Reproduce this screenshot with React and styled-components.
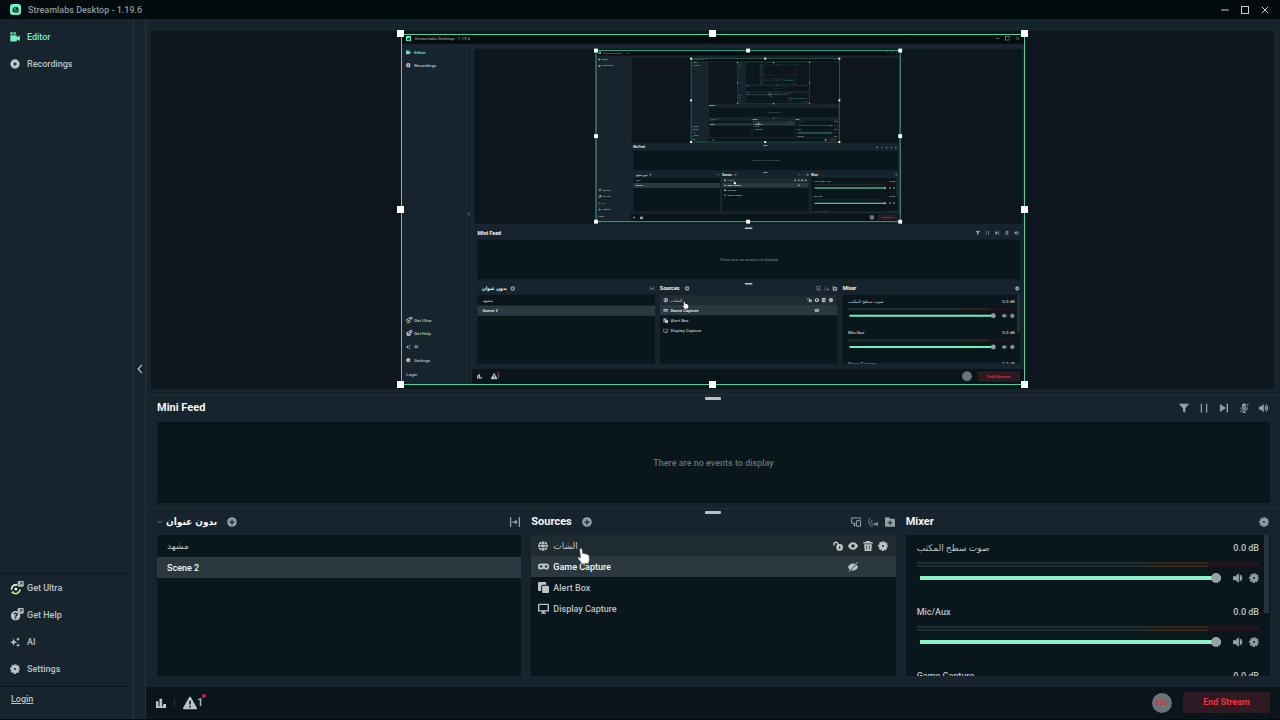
import React, { createContext, useContext } from "react";
import styled, { createGlobalStyle, css } from "styled-components";
import { FaQuestionCircle, FaGlobe } from "react-icons/fa";

const c = {
  title: "#020b0e",
  panel: "#17242d",
  line: "#26343c",
  stage: "#0c161c",
  well: "#09161c",
  footer: "#09151a",
  selected: "#2b383f",
  hover: "#202b31",
  text: "#bdc3c6",
  icon: "#949ea3",
  bright: "#f4f6f7",
  muted: "#667177",
  teal: "#74efbf",
  frame: "#4fd0a0",
  red: "#f0303f",
  redBg: "#2e1a23",
};

const Global = createGlobalStyle`
  *, *::before, *::after { box-sizing: border-box; }
  body {
    margin: 0;
    background: ${c.title};
    color: ${c.text};
    font: 500 9px/14px Roboto, "DejaVu Sans", sans-serif;
  }
  h2 { margin: 0; }
  ul { margin: 0; padding: 0; list-style: none; }
`;

/* ---------- icons ---------- */

const Svg = ({ size = 10, children, ...rest }) => (
  <svg width={size} height={size} viewBox="0 0 16 16" fill="currentColor" aria-hidden="true" {...rest}>
    {children}
  </svg>
);
const stroke = { fill: "none", stroke: "currentColor", strokeWidth: 1.6 };

const LogoIcon = (p) => (
  <Svg {...p}>
    <rect width="16" height="16" rx="4" fill={c.teal} />
    <path d="M3.5 9.5a5 5 0 0 1 5-5h1a3 3 0 0 1 3 3v5h-6a3 3 0 0 1-3-3z" fill="#0c3a33" />
    <path d="M6 8.6a2.6 2.6 0 0 1 2.6-2.4" fill="none" stroke={c.teal} strokeWidth="1.2" />
    <path d="M8.2 9v1.6M10.6 9v1.6" stroke={c.teal} strokeWidth="1.1" />
  </Svg>
);
const EditorIcon = (p) => (
  <Svg {...p}>
    <rect x="0.5" y="0.5" width="3.6" height="3.6" rx="0.8" />
    <rect x="5.6" y="0.5" width="3.6" height="3.6" rx="0.8" />
    <path d="M0.5 5.2h9.4a1 1 0 0 1 1 1v2l4-2.4a.5.5 0 0 1 .8.4v7.4a.5.5 0 0 1-.8.4l-4-2.2v2.4a1 1 0 0 1-1 1H1.5a1 1 0 0 1-1-1z" />
  </Svg>
);
const RecordingsIcon = (p) => (
  <Svg {...p}>
    <path fillRule="evenodd" d="M8 .5a7.5 7.5 0 1 1 0 15 7.5 7.5 0 0 1 0-15zM6.2 4.8v6.4L11.4 8z" />
  </Svg>
);
const GearIcon = (p) => (
  <Svg {...p}>
    <circle cx="8" cy="8" r="3.9" fill="none" stroke="currentColor" strokeWidth="4.6" />
    <circle cx="8" cy="8" r="6.6" fill="none" stroke="currentColor" strokeWidth="2.4" strokeDasharray="3.7 1.484" strokeDashoffset="1.85" />
  </Svg>
);
const SparkIcon = (p) => (
  <Svg {...p}>
    <path d="M5.8 2.400 7.400 6.600l4.200 1.600-4.200 1.600-1.600 4.200-1.600-4.200L0 8.200l4.200-1.600z" />
    <path d="m12.800.200 1 2.200 2.200 1-2.200 1-1 2.200-1-2.200-2.200-1 2.200-1zM12.800 9.800l1 2.200 2.200 1-2.200 1-1 2.200-1-2.200-2.200-1 2.200-1z" />
  </Svg>
);
const ExternalBadge = () => (
  <>
    <rect x="9" y="0" width="8.6" height="8.2" rx="1.4" fill="#b9c0c3" />
    <path d="M11.4 6 15 2.4M12.4 2.2h2.8V5" fill="none" stroke={c.panel} strokeWidth="1.1" />
  </>
);
const UltraIcon = ({ size = 14, ...p }) => (
  <svg width={size} height={size} viewBox="0 0 20 20" aria-hidden="true" {...p}>
    <g transform="translate(1 3)">
      <path d="M1.2 9.5a6 6 0 0 1 8-6.6" fill="none" stroke="#f1f4e8" strokeWidth="2.4" />
      <path d="M2.2 12.2a6 6 0 0 0 11-3.4" fill="none" stroke="#c6e27c" strokeWidth="2.4" />
      <circle cx="7.4" cy="8.6" r="2.1" fill="#f1f4e8" />
      <path d="m1.5 14.5 2.6-2.4" stroke="#c6e27c" strokeWidth="2" />
    </g>
    <g transform="translate(2 0)"><ExternalBadge /></g>
  </svg>
);
const HelpIcon = ({ size = 14, ...p }) => (
  <svg width={size} height={size} viewBox="0 0 20 20" aria-hidden="true" fill={c.text} color={c.text} {...p}>
    <FaQuestionCircle x="1" y="4" size="14" />
    <g transform="translate(2 0)"><ExternalBadge /></g>
  </svg>
);
const StatsIcon = (p) => (
  <Svg {...p}>
    <path d="M0 5h4v11H0zM5.6 1h4.2v15H5.6zM11.4 9.5H16V16h-4.6zM0 13.6h16V16H0z" />
  </Svg>
);
const WarningIcon = (p) => (
  <Svg {...p}>
    <path fillRule="evenodd" d="M7 1.4a1.2 1.2 0 0 1 2 0l6.8 12a1.2 1.2 0 0 1-1 1.8H1.2a1.2 1.2 0 0 1-1-1.8zM7.1 5.4v4.4h1.8V5.4zm0 5.8V13h1.8v-1.8z" />
  </Svg>
);
const PlusIcon = (p) => (
  <Svg {...p}>
    <path fillRule="evenodd" d="M8 .3a7.7 7.7 0 1 1 0 15.4A7.7 7.7 0 0 1 8 .3zM7 3.8V7H3.8v2H7v3.2h2V9h3.2V7H9V3.8z" />
  </Svg>
);
const TransitionIcon = (p) => (
  <Svg {...p}>
    <path d="M1 0v16M15 0v16M3.600 8h7" {...stroke} strokeWidth="2" />
    <path d="M8 4 12.600 8 8 12z" />
  </Svg>
);
const FilterIcon = (p) => (
  <Svg {...p}>
    <path d="M.6 1h14.8c.5 0 .7.6.4 1L10.200 8.400V14.400a.7.7 0 0 1-1.100.6l-2.800-2V8.400L.2 2c-.3-.4-.1-1 .4-1z" />
  </Svg>
);
const PauseIcon = (p) => (
  <Svg {...p}>
    <path d="M2.800 1h2v14h-2zM11.200 1h2v14h-2z" />
  </Svg>
);
const SkipIcon = (p) => (
  <Svg {...p}>
    <path d="M1.500 1.600v12.800L11.200 8zM12.200 1.200h2.200v13.600h-2.200z" />
  </Svg>
);
const MutedIcon = (p) => (
  <Svg {...p}>
    <path d="M4.800 4.500A3.600 3.600 0 0 1 11.400 2.200L4.800 9.400zM11.600 5.400V7.500A3.600 3.600 0 0 1 8 11.200l-1.600-.4z" />
    <path d="M2.600 7.400c0 1 .3 1.900.8 2.600M13.600 7.200A5.500 5.500 0 0 1 8 13l-1.800-.3M8 12.600V15M5 15h6M1 15 15.400 1" {...stroke} />
  </Svg>
);
const VolumeIcon = (p) => (
  <Svg {...p}>
    <path d="M0 5.400h3L7.600 1.400v13.200L3 10.600H0z" />
    <path d="M9.600 5.300a3.600 3.600 0 0 1 0 5.400M11.200 2.600a7 7 0 0 1 0 10.800" {...stroke} strokeWidth="2" />
  </Svg>
);
const SpeakerIcon = (p) => (
  <Svg {...p}>
    <path d="M0 5h3.400L9.400.4v15.200L3.400 11H0zM10.800 2.400a5.800 5.800 0 0 1 0 11.200z" />
  </Svg>
);
const GlobeIcon = ({ size = 10, ...p }) => <FaGlobe size={size} aria-hidden="true" {...p} />;
const PadIcon = (p) => (
  <Svg {...p}>
    <path fillRule="evenodd" d="M4 3.600h8a4.300 4.300 0 0 1 0 8.700c-1.500 0-2.200-1.200-4-1.200s-2.500 1.200-4 1.200a4.300 4.300 0 0 1 0-8.700zM3.800 5.800v1.400H2.400v1.500h1.400v1.400h1.400V8.700h1.400V7.200H5.200V5.800zM11.800 6a1.900 1.900 0 1 0 0 3.900 1.900 1.900 0 0 0 0-3.900z" />
  </Svg>
);
const AlertBoxIcon = (p) => (
  <Svg {...p}>
    <path d="M1.500 0h9A1.500 1.500 0 0 1 12 1.500V4H7.500A3 3 0 0 0 4.500 7v6h-3A1.500 1.500 0 0 1 0 11.500v-10A1.500 1.500 0 0 1 1.500 0z" />
    <rect x="6" y="5.500" width="10" height="10.500" rx="1.500" />
  </Svg>
);
const DisplayIcon = (p) => (
  <Svg {...p}>
    <path fillRule="evenodd" d="M1.400 1h13.200c.8 0 1.400.6 1.400 1.400v8.700c0 .8-.6 1.400-1.400 1.400H9.800V14h1.800v1.600H4.400V14h1.800v-1.500H1.400c-.8 0-1.400-.6-1.400-1.400V2.400C0 1.600.6 1 1.400 1zM2 3v7.500h12V3z" />
  </Svg>
);
const UnlockIcon = (p) => (
  <Svg {...p}>
    <path d="M1.500 7V4.800a3 3 0 0 1 6 0V8" fill="none" stroke="currentColor" strokeWidth="2.400" />
    <path fillRule="evenodd" d="M10.600 4.800a5.400 5.400 0 1 1 0 10.800 5.400 5.400 0 0 1 0-10.800zm-1 3.500v3.900h2V8.300z" />
  </Svg>
);
const EyeIcon = (p) => (
  <Svg {...p}>
    <path fillRule="evenodd" d="M8 2c4 0 6.600 2.900 8 6-1.400 3.100-4 6-8 6S1.400 11.100 0 8c1.400-3.100 4-6 8-6zM8 5.200a2.800 2.800 0 1 0 0 5.600 2.800 2.800 0 0 0 0-5.600z" />
  </Svg>
);
const HiddenIcon = (p) => (
  <Svg {...p}>
    <path d="M8 2.200c1.300 0 2.400.3 3.400.7L3 12.800C1.600 11.500.6 9.800 0 8c1.400-3.300 4.300-5.800 8-5.800zM13.600 4.300C14.700 5.300 15.500 6.600 16 8c-1.400 3.300-4.300 5.800-8 5.800-1 0-2-.2-2.900-.5z" />
    <path d="M1.400 15.600 15 .4" {...stroke} />
  </Svg>
);
const TrashIcon = (p) => (
  <Svg {...p}>
    <path fillRule="evenodd" d="M5.500 0h5l.8 1.500H15.500v2.500H.5V1.500h4.200zM1.800 5h12.400l-.8 10a1 1 0 0 1-1 1H3.600a1 1 0 0 1-1-1zM5.400 7.200v6.200h1.100V7.200zm4.100 0v6.200h1.100V7.200z" />
  </Svg>
);
const DualIcon = (p) => (
  <Svg {...p}>
    <path d="M15 4V1.500H1V10h6.500M3.500 13.500h4M5.600 10v3.500M9 5.800h6.200v9H9z" {...stroke} />
  </Svg>
);
const SignalIcon = (p) => (
  <Svg {...p}>
    <path d="M3.600 1.500C.6 4.500.6 9 3.200 12.400c1.300 1.600 2.800 2.400 4.400 2.600M7 4.400c-1.600 1.800-1.600 4.400-.2 6.400.5.800 1.200 1.300 2 1.600" {...stroke} strokeWidth="1.300" />
    <path d="M9.500 9.500h3l3.500-2v7l-3.500-1.500h-3z" opacity="0.800" />
  </Svg>
);
const FolderIcon = (p) => (
  <Svg {...p}>
    <path fillRule="evenodd" d="M1.400.5h4.800l2 2.400h6.400c.8 0 1.400.6 1.400 1.400v9.800c0 .8-.6 1.400-1.400 1.400H1.400C.6 15.500 0 14.900 0 14.100V1.900C0 1.100.6.500 1.400.5zM7.200 5.600v2.600H4.600v1.800h2.600v2.600H9V10h2.600V8.200H9V5.600z" />
  </Svg>
);
const ChevronDown = (p) => (
  <Svg {...p}><path d="M2 4.500 8 11l6-6.500" {...stroke} /></Svg>
);
const ChevronLeft = (p) => (
  <Svg {...p}><path d="M11 1.500 5 8l6 6.500" {...stroke} strokeWidth="2" /></Svg>
);
const MinimizeIcon = (p) => <Svg {...p}><path d="M2 8h12" {...stroke} /></Svg>;
const MaximizeIcon = (p) => <Svg {...p}><rect x="2.400" y="2.400" width="11.200" height="11.200" {...stroke} /></Svg>;
const CloseIcon = (p) => <Svg {...p}><path d="m3 3 10 10m0-10-10 10" {...stroke} /></Svg>;
const HandIcon = ({ size = 16, ...p }) => (
  <svg width={size} height={size} viewBox="0 0 16 16" aria-hidden="true" {...p}>
    <path d="M3.600 1.600c0-1.400 2.400-1.400 2.600 0l.6 4 .8-.3c.7-.2 1.300.1 1.600.6.800-.4 1.500 0 1.800.6 1-.3 1.900.2 2 1.400l.5 3.600-1 4.300H6L2 10.600c-.7-1 .6-2 1.500-1.300l1 .8z" fill="#fff" stroke="#2a3338" strokeWidth="0.600" />
  </svg>
);

/* ---------- data ---------- */

const navTop = [
  { label: "Editor", icon: EditorIcon, active: true },
  { label: "Recordings", icon: RecordingsIcon },
];
const navBottom = [
  { label: "Get Ultra", icon: UltraIcon, size: 14 },
  { label: "Get Help", icon: HelpIcon, size: 14 },
  { label: "AI", icon: SparkIcon },
  { label: "Settings", icon: GearIcon },
];
const feedTools = [
  ["Filter events", FilterIcon],
  ["Pause queue", PauseIcon],
  ["Skip alert", SkipIcon],
  ["Mute events", MutedIcon],
  ["Volume", VolumeIcon],
];
const scenes = [{ name: "مشهد" }, { name: "Scene 2", selected: true }];
const sources = [
  { name: "الشات", icon: GlobeIcon, hovered: true },
  { name: "Game Capture", icon: PadIcon, selected: true, hidden: true },
  { name: "Alert Box", icon: AlertBoxIcon },
  { name: "Display Capture", icon: DisplayIcon },
];
const channels = ["صوت سطح المكتب", "Mic/Aux", "Game Capture"];

/* ---------- captured screen shown inside the preview ---------- */

const arabicTitle = css`
  font-family: "DejaVu Sans Condensed", "DejaVu Sans", sans-serif;
  font-size: 10px;
`;
const Label = styled.text`
  font-family: Roboto, "DejaVu Sans", sans-serif;
  font-size: ${(p) => (p.$title ? 11 : 9)}px;
  font-weight: ${(p) => (p.$title ? 700 : 500)};
  fill: ${(p) => p.$color};
  ${(p) => p.$arabic && arabicTitle}
`;

const DepthContext = createContext(0);

/* Labels of the innermost screens are smaller than a pixel, so they become plain strokes. */
function CaptureText({ x, y, color = c.text, title, arabic, anchor = "start", children }) {
  const depth = useContext(DepthContext);
  if (depth < 2) {
    const width = children.length * (title ? 6 : 5);
    const shift = anchor === "middle" ? width / 2 : anchor === "end" ? width : 0;
    return <rect x={x - shift} y={y - 6} width={width} height="5" fill={color} opacity="0.6" />;
  }
  return (
    <Label x={x} y={y} textAnchor={anchor} $color={color} $title={title} $arabic={arabic}>
      {children}
    </Label>
  );
}

const handlePoints = [[0, 0], [0.5, 0], [1, 0], [0, 0.5], [1, 0.5], [0, 1], [0.5, 1], [1, 1]];

function CapturedScreen({ depth }) {
  return (
    <DepthContext.Provider value={depth}>
      <g color={c.text}>
        <rect width="1280" height="720" fill={c.panel} />
        <rect width="1280" height="20" fill={c.title} />
        <LogoIcon x="10" y="4" size="11" />
        <CaptureText x="28" y="13" color="#8f979b">Streamlabs Desktop - 1.19.6</CaptureText>
        <MinimizeIcon x="1219" y="4" />
        <MaximizeIcon x="1239" y="4" />
        <CloseIcon x="1260" y="4" />
        <rect x="133" y="20" width="1" height="700" fill={c.line} />
        <rect x="145" y="20" width="1" height="700" fill={c.line} />
        <ChevronLeft x="135" y="364" size="9" />
        {navTop.map(({ label, icon: Icon, active }, i) => (
          <g key={label} color={active ? c.teal : c.text}>
            <Icon x="10" y={32 + i * 27} />
            <CaptureText x="27" y={40 + i * 27} color={active ? c.teal : c.text}>{label}</CaptureText>
          </g>
        ))}
        {navBottom.map(({ label, icon: Icon, size }, i) => (
          <g key={label}>
            <Icon x="10" y={(size ? 580 : 583) + i * 27} size={size} />
            <CaptureText x="27" y={591 + i * 27}>{label}</CaptureText>
          </g>
        ))}
        <CaptureText x="11" y="702">Login</CaptureText>

        <rect x="151" y="31" width="1123" height="358" fill={c.stage} />
        {depth > 0 && <CaptureFrame depth={depth} />}
        <rect x="705" y="397" width="16" height="3" rx="1" fill={c.text} />
        <CaptureText x="157" y="412" title color={c.bright}>Mini Feed</CaptureText>
        <g color={c.icon}>
          {feedTools.map(([label, Icon], i) => <Icon key={label} x={1178 + i * 20} y="403" />)}
        </g>
        <rect x="157" y="422" width="1113" height="81" fill={c.well} />
        <CaptureText x={713} y="465" anchor="middle" color={c.muted}>There are no events to display</CaptureText>
        <rect x="705" y="511" width="16" height="3" rx="1" fill={c.text} />

        <CaptureText x="166" y="526" title arabic color={c.bright}>بدون عنوان</CaptureText>
        <g color={c.icon}>
          <PlusIcon x="224" y="517" />
          <TransitionIcon x="510" y="517" />
          <PlusIcon x="582" y="517" />
          <DualIcon x="851" y="517" />
          <SignalIcon x="868" y="517" />
          <FolderIcon x="885" y="517" />
          <GearIcon x="1259" y="517" />
        </g>
        <CaptureText x="531" y="526" title color={c.bright}>Sources</CaptureText>
        <CaptureText x="906" y="526" title color={c.bright}>Mixer</CaptureText>

        <rect x="157" y="535" width="364" height="141" fill={c.well} />
        <rect x="157" y="557" width="364" height="21" fill={c.selected} />
        {scenes.map((s, i) => (
          <CaptureText key={s.name} x="167" y={549 + i * 21} color={s.selected ? c.bright : c.text}>{s.name}</CaptureText>
        ))}
        <rect x="531" y="535" width="364" height="141" fill={c.well} />
        <rect x="531" y="535" width="364" height="21" fill={c.hover} />
        <rect x="531" y="556" width="364" height="21" fill={c.selected} />
        {sources.map(({ name, icon: Icon, selected }, i) => (
          <g key={name}>
            <Icon x="538" y={541 + i * 21} />
            <CaptureText x="553" y={549 + i * 21} color={selected ? c.bright : c.text}>{name}</CaptureText>
          </g>
        ))}
        <UnlockIcon x="833" y="541" />
        <EyeIcon x="848" y="541" />
        <TrashIcon x="862" y="541" />
        <GearIcon x="877" y="541" />
        <HiddenIcon x="848" y="562" />
        <HandIcon x="576" y="548" />

        <svg x="906" y="535" width="364" height="141" viewBox="0 0 364 141">
          <rect width="364" height="141" fill={c.well} />
          {channels.map((name, i) => (
            <g key={name} transform={`translate(0 ${i * 64})`}>
              <CaptureText x={11} y="16">{name}</CaptureText>
              <CaptureText x={353} y="16" anchor="end">0.0 dB</CaptureText>
              <rect x="11" y="27" width="234" height="5" fill="#1a2c2b" />
              <rect x="245" y="27" width="56" height="5" fill="#30241a" />
              <rect x="301" y="27" width="52" height="5" fill="#290f19" />
              <rect x="14" y="41" width="296" height="4" rx="1" fill={c.teal} />
              <circle cx="309" cy="43" r="5" fill={c.icon} />
              <g color={c.icon}>
                <SpeakerIcon x="327" y="38" />
                <GearIcon x="343" y="38" />
              </g>
            </g>
          ))}
          <rect x="358" y="0" width="5" height="78" fill="#27343b" />
        </svg>

        <rect x="146" y="687" width="1134" height="33" fill={c.footer} />
        <StatsIcon x="156" y="697" />
        <WarningIcon x="184" y="695" size="14" />
        <CaptureText x={197} y="706">1</CaptureText>
        <circle cx="200" cy="696" r="2" fill="#d01f45" />
        <circle cx="1161" cy="702" r="10" fill="#69737a" />
        <rect x="1183" y="692" width="87" height="21" rx="2" fill={c.redBg} />
        <CaptureText x={1226} y="706" anchor="middle" color={c.red}>End Stream</CaptureText>
      </g>
    </DepthContext.Provider>
  );
}

function CaptureFrame({ depth }) {
  return (
    <g>
      <svg x="400" y="34" width="624" height="351" viewBox="0 0 1280 720">
        <CapturedScreen depth={depth - 1} />
      </svg>
      <rect x="400" y="34" width="624" height="351" fill="none" stroke={c.frame} strokeWidth="2" opacity={0.4 + depth * 0.1} />
      {handlePoints.map(([px, py]) => (
        <rect key={`${px}-${py}`} x={396 + px * 624} y={30 + py * 351} width="8" height="8" fill="#fff" />
      ))}
    </g>
  );
}

/* ---------- page ---------- */

const Window = styled.div`
  min-height: 100vh;
  display: flex;
  flex-direction: column;
  padding-bottom: 1px;
`;
const TitleBar = styled.header`
  height: 19px;
  flex: none;
  display: flex;
  align-items: center;
  gap: 7px;
  padding: 0 10px;
  background: ${c.title};
  color: #8f979b;
`;
const WindowButtons = styled.div`
  display: flex;
  gap: 10px;
  margin-left: auto;
  color: #c9cdcf;
`;
const IconButton = styled.button`
  display: flex;
  flex: none;
  padding: 0;
  border: 0;
  background: none;
  color: inherit;
  cursor: pointer;
`;
const Body = styled.div`
  flex: 1;
  display: flex;
  background: ${c.panel};
`;
const Sidebar = styled.nav`
  width: 134px;
  flex: none;
  display: flex;
  flex-direction: column;
  border-right: 1px solid ${c.line};
  padding-top: 4px;
`;
const NavList = styled.ul`
  ${(p) => p.$bottom && css`
    margin: auto 4px 0 0;
    border-top: 1px solid #101a20;
    border-bottom: 1px solid #0b151a;
    padding-bottom: 4px;
  `}
`;
const NavLink = styled.a`
  display: flex;
  align-items: center;
  height: 27px;
  padding-left: 10px;
  color: ${(p) => (p.$active ? c.teal : c.text)};
  text-decoration: none;
`;
const NavIcon = styled.span`
  display: flex;
  width: 17px;
`;
const LoginLink = styled.a`
  margin: 5px 11px 13px;
  color: ${c.text};
`;
const CollapseStrip = styled.div`
  width: 12px;
  flex: none;
  display: flex;
  align-items: center;
  justify-content: center;
  border-right: 1px solid ${c.line};
  color: ${c.text};
`;
const Main = styled.main`
  flex: 1;
  min-width: 0;
  display: flex;
  flex-direction: column;
`;
const Stage = styled.section`
  flex: 1;
  min-height: 200px;
  display: flex;
  justify-content: center;
  margin: 12px 6px 5px 5px;
  padding: 3px 0 4px;
  background: ${c.stage};
`;
const Selection = styled.div`
  position: relative;
  aspect-ratio: 16 / 9;
  outline: 1px solid ${c.frame};
  outline-offset: -1px;
`;
const Picture = styled.svg`
  display: block;
  width: 100%;
  height: 100%;
`;
const Handle = styled.span`
  position: absolute;
  left: ${(p) => p.$x * 100}%;
  top: ${(p) => p.$y * 100}%;
  width: 7px;
  height: 7px;
  margin: -4px;
  background: #fff;
`;
const Splitter = styled.div`
  height: 6px;
  flex: none;
  display: flex;
  justify-content: center;
  align-items: flex-end;
  border-top: 1px solid #212e36;

  &::after {
    content: "";
    width: 16px;
    height: 3px;
    border-radius: 1px;
    background: #b9c1c6;
  }
`;
const PanelHead = styled.div`
  display: flex;
  align-items: center;
  gap: 10px;
  height: ${(p) => p.$height || 21}px;
  padding: 0 1px 6px 0;
  color: ${c.icon};
`;
const PanelTitle = styled.h2`
  color: ${c.bright};
  font-size: 11px;
  line-height: 16px;
  font-weight: 700;
  ${(p) => p.$arabic && arabicTitle}
`;
const Tools = styled.div`
  display: flex;
  align-items: center;
  gap: ${(p) => p.$gap}px;
  margin-left: auto;
`;
const Feed = styled.section`
  padding: 0 10px 5px 11px;
`;
const FeedBox = styled.div`
  height: 81px;
  display: flex;
  align-items: center;
  justify-content: center;
  background: ${c.well};
  color: ${c.muted};
`;
const Panels = styled.div`
  display: grid;
  grid-template-columns: repeat(3, 1fr);
  gap: 10px;
  padding: 0 10px 11px 11px;
`;
const Well = styled.div`
  position: relative;
  height: 141px;
  overflow: hidden;
  background: ${c.well};
`;
const Row = styled.li`
  position: relative;
  display: flex;
  align-items: center;
  height: 21px;
  margin-bottom: ${(p) => (p.$spaced ? 1 : 0)}px;
  padding: 0 8px 0 ${(p) => p.$inset}px;
  background: ${(p) => (p.$selected ? c.selected : p.$hovered ? c.hover : "transparent")};
  color: ${(p) => (p.$selected ? c.bright : c.text)};
`;
const RowIcon = styled.span`
  display: flex;
  width: 15px;
  color: ${c.text};
`;
const RowTools = styled.div`
  display: flex;
  gap: 5px;
  margin-left: auto;
  padding-right: ${(p) => (p.$short ? 30 : 0)}px;
  color: ${c.text};
`;
const Pointer = styled.span`
  position: absolute;
  left: 45px;
  top: 13px;
  z-index: 2;
  display: flex;
`;
const TitleCaret = styled.span`
  display: flex;
  margin-right: -7px;
`;
const Channel = styled.div`
  height: 64px;
  padding: 0 11px;
`;
const ChannelList = styled.div`
  padding-top: 6px;
`;
const ChannelHead = styled.div`
  display: flex;
  justify-content: space-between;
  line-height: 14px;
`;
const Meter = styled.div`
  display: grid;
  grid-template-columns: 68fr 17fr 15fr;
  height: 2px;
  margin-top: ${(p) => (p.$first ? 7 : 1)}px;
`;
const MeterZone = styled.span`
  background: ${(p) => p.$color};
`;
const SliderRow = styled.div`
  display: flex;
  align-items: center;
  gap: 6px;
  height: 12px;
  margin-top: 5px;
  padding-left: 3px;
  color: ${c.icon};
`;
const Slider = styled.input`
  appearance: none;
  flex: 1;
  min-width: 0;
  height: 10px;
  margin: 0 6px 0 0;
  background: linear-gradient(#8cf0c8, #8cf0c8) center / 100% 4px no-repeat;

  &::-webkit-slider-thumb {
    appearance: none;
    width: 10px;
    height: 10px;
    border-radius: 50%;
    background: #98a1a5;
  }
`;
const ScrollThumb = styled.span`
  position: absolute;
  top: 0;
  right: 1px;
  width: 5px;
  height: 78px;
  background: #27343b;
`;
const Footer = styled.footer`
  height: 32px;
  flex: none;
  display: flex;
  align-items: center;
  padding: 0 10px 1px;
  background: ${c.footer};
  color: ${c.text};
`;
const Divider = styled.span`
  width: 1px;
  height: 8px;
  margin: 0 8px;
  background: #26333a;
`;
const Alerts = styled.button`
  position: relative;
  display: flex;
  align-items: center;
  padding: 0 3px 0 0;
  border: 0;
  background: none;
  color: inherit;
  font: 500 11px/14px Roboto, sans-serif;

  &::after {
    content: "";
    position: absolute;
    right: 0;
    top: -2px;
    width: 4px;
    height: 4px;
    border-radius: 50%;
    background: #d01f45;
  }
`;
const RecButton = styled.button`
  width: 20px;
  height: 20px;
  margin: 0 11px 0 auto;
  padding: 0;
  border: 0;
  border-radius: 50%;
  background: #69737a;
  color: #c43f4e;
  font: 700 7px/20px Roboto, sans-serif;
  text-align: center;
`;
const EndButton = styled.button`
  width: 87px;
  height: 21px;
  padding: 0;
  border: 0;
  border-radius: 2px;
  background: ${c.redBg};
  color: ${c.red};
  font: 700 9px/21px Roboto, sans-serif;
`;

const ToolButton = ({ label, icon: Icon, size }) => (
  <IconButton type="button" aria-label={label}><Icon size={size} /></IconButton>
);

const Nav = ({ items, bottom }) => (
  <NavList $bottom={bottom}>
    {items.map(({ label, icon: Icon, size, active }) => (
      <li key={label}>
        <NavLink href="#" $active={active}>
          <NavIcon><Icon size={size} /></NavIcon>
          {label}
        </NavLink>
      </li>
    ))}
  </NavList>
);

export default function App() {
  return (
    <Window>
      <Global />
      <TitleBar>
        <LogoIcon size="11" />
        Streamlabs Desktop - 1.19.6
        <WindowButtons>
          <ToolButton label="Minimize" icon={MinimizeIcon} />
          <ToolButton label="Maximize" icon={MaximizeIcon} />
          <ToolButton label="Close" icon={CloseIcon} />
        </WindowButtons>
      </TitleBar>
      <Body>
        <Sidebar>
          <Nav items={navTop} />
          <Nav items={navBottom} bottom />
          <LoginLink href="#">Login</LoginLink>
        </Sidebar>
        <CollapseStrip>
          <ToolButton label="Collapse sidebar" icon={ChevronLeft} />
        </CollapseStrip>
        <Main>
          <Stage>
            <Selection>
              <Picture viewBox="0 0 1280 720" role="img" aria-label="Display capture preview">
                <CapturedScreen depth={4} />
              </Picture>
              {handlePoints.map(([x, y]) => <Handle key={`${x}-${y}`} $x={x} $y={y} />)}
            </Selection>
          </Stage>
          <Splitter />
          <Feed>
            <PanelHead $height={22}>
              <PanelTitle>Mini Feed</PanelTitle>
              <Tools $gap={10}>
                {feedTools.map(([label, icon]) => <ToolButton key={label} label={label} icon={icon} />)}
              </Tools>
            </PanelHead>
            <FeedBox>There are no events to display</FeedBox>
          </Feed>
          <Splitter />
          <Panels>
            <section>
              <PanelHead>
                <TitleCaret><ChevronDown size="6" /></TitleCaret>
                <PanelTitle $arabic>بدون عنوان</PanelTitle>
                <ToolButton label="Add scene" icon={PlusIcon} />
                <Tools><ToolButton label="Scene transitions" icon={TransitionIcon} /></Tools>
              </PanelHead>
              <Well as="ul">
                {scenes.map((s) => (
                  <Row key={s.name} $inset={10} $spaced $selected={s.selected}>{s.name}</Row>
                ))}
              </Well>
            </section>
            <section>
              <PanelHead>
                <PanelTitle>Sources</PanelTitle>
                <ToolButton label="Add source" icon={PlusIcon} />
                <Tools $gap={7}>
                  <ToolButton label="Dual output" icon={DualIcon} />
                  <ToolButton label="Selective recording" icon={SignalIcon} />
                  <ToolButton label="Add folder" icon={FolderIcon} />
                </Tools>
              </PanelHead>
              <Well as="ul">
                {sources.map(({ name, icon: Icon, selected, hovered, hidden }) => (
                  <Row key={name} $inset={7} $selected={selected} $hovered={hovered}>
                    <RowIcon><Icon size={hovered ? 10 : 11} /></RowIcon>
                    {name}
                    {hovered && (
                      <>
                        <RowTools>
                          <ToolButton label="Lock source" icon={UnlockIcon} />
                          <ToolButton label="Hide source" icon={EyeIcon} />
                          <ToolButton label="Delete source" icon={TrashIcon} />
                          <ToolButton label="Source properties" icon={GearIcon} />
                        </RowTools>
                        <Pointer><HandIcon /></Pointer>
                      </>
                    )}
                    {hidden && (
                      <RowTools $short><ToolButton label="Show source" icon={HiddenIcon} /></RowTools>
                    )}
                  </Row>
                ))}
              </Well>
            </section>
            <section>
              <PanelHead>
                <PanelTitle>Mixer</PanelTitle>
                <Tools><ToolButton label="Mixer settings" icon={GearIcon} /></Tools>
              </PanelHead>
              <Well>
                <ChannelList>
                  {channels.map((name, i) => (
                    <Channel key={name}>
                      <ChannelHead>
                        <label htmlFor={`volume-${i}`}>{name}</label>
                        <span>0.0 dB</span>
                      </ChannelHead>
                      {[0, 1].map((n) => (
                        <Meter key={n} $first={n === 0}>
                          <MeterZone $color="#1c302e" />
                          <MeterZone $color="#38281a" />
                          <MeterZone $color="#2c0f1a" />
                        </Meter>
                      ))}
                      <SliderRow>
                        <Slider type="range" id={`volume-${i}`} min="0" max="100" defaultValue="100" />
                        <ToolButton label={`Mute ${name}`} icon={SpeakerIcon} />
                        <ToolButton label={`${name} settings`} icon={GearIcon} />
                      </SliderRow>
                    </Channel>
                  ))}
                </ChannelList>
                <ScrollThumb />
              </Well>
            </section>
          </Panels>
          <Footer>
            <ToolButton label="Performance" icon={StatsIcon} />
            <Divider />
            <Alerts type="button" aria-label="1 notification"><WarningIcon size="14" />1</Alerts>
            <RecButton type="button">REC</RecButton>
            <EndButton type="button">End Stream</EndButton>
          </Footer>
        </Main>
      </Body>
    </Window>
  );
}
